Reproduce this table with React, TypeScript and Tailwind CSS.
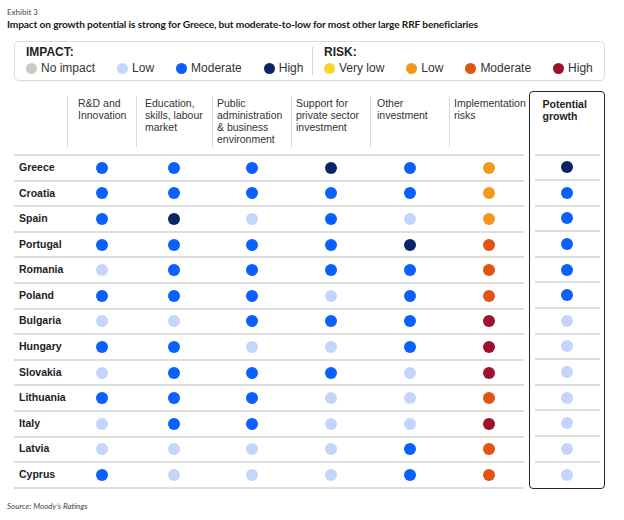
import React from 'react';

type Key = 'n' | 'l' | 'm' | 'h' | 'vl' | 'rl' | 'rm' | 'rh';

const dotColor: Record<Key, string> = {
  n: 'bg-[#c9c9c9]',
  l: 'bg-[#c3d5fb]',
  m: 'bg-[#0a5fff]',
  h: 'bg-[#0b2466]',
  vl: 'bg-[#f7d52a]',
  rl: 'bg-[#f2991c]',
  rm: 'bg-[#e05512]',
  rh: 'bg-[#a0102f]',
};

const rows: { name: string; cells: Key[]; growth: Key }[] = [
  { name: 'Greece', cells: ['m', 'm', 'm', 'h', 'm', 'rl'], growth: 'h' },
  { name: 'Croatia', cells: ['m', 'm', 'm', 'm', 'm', 'rl'], growth: 'm' },
  { name: 'Spain', cells: ['m', 'h', 'l', 'm', 'l', 'rl'], growth: 'm' },
  { name: 'Portugal', cells: ['m', 'm', 'm', 'm', 'h', 'rm'], growth: 'm' },
  { name: 'Romania', cells: ['l', 'm', 'm', 'm', 'm', 'rm'], growth: 'm' },
  { name: 'Poland', cells: ['m', 'm', 'm', 'l', 'm', 'rm'], growth: 'm' },
  { name: 'Bulgaria', cells: ['l', 'l', 'm', 'm', 'm', 'rh'], growth: 'l' },
  { name: 'Hungary', cells: ['m', 'm', 'l', 'l', 'm', 'rh'], growth: 'l' },
  { name: 'Slovakia', cells: ['l', 'm', 'm', 'm', 'l', 'rh'], growth: 'l' },
  { name: 'Lithuania', cells: ['m', 'm', 'm', 'l', 'l', 'rm'], growth: 'l' },
  { name: 'Italy', cells: ['l', 'm', 'm', 'l', 'l', 'rh'], growth: 'l' },
  { name: 'Latvia', cells: ['l', 'l', 'l', 'l', 'm', 'rm'], growth: 'l' },
  { name: 'Cyprus', cells: ['m', 'l', 'l', 'l', 'm', 'rm'], growth: 'l' },
];

const headers: { lines: string[]; pad: string }[] = [
  { lines: ['R&D and', 'Innovation'], pad: 'pl-[10px]' },
  { lines: ['Education,', 'skills, labour', 'market'], pad: 'pl-[8px]' },
  { lines: ['Public', 'administration', '& business', 'environment'], pad: 'pl-[4px]' },
  { lines: ['Support for', 'private sector', 'investment'], pad: 'pl-[4px]' },
  { lines: ['Other', 'investment'], pad: 'pl-[6px]' },
  { lines: ['Implementation', 'risks'], pad: 'pl-[4px]' },
];

const grid = 'grid grid-cols-[53px_69px_76px_79px_79px_79px_75px]';

function Dot({ k, size = 'w-[12px] h-[12px]' }: { k: Key; size?: string }) {
  return <span className={`block rounded-full ${size} ${dotColor[k]}`} />;
}

function LegendItem({ k, label }: { k: Key; label: string }) {
  return (
    <div className="flex items-center gap-[4px]">
      <Dot k={k} size="w-[11px] h-[11px]" />
      <span>{label}</span>
    </div>
  );
}

export default function App() {
  return (
    <div
      className="w-[624px] h-[520px] bg-white overflow-hidden pt-[7px] text-[#222]"
      style={{ fontFamily: '"Liberation Sans", Arial, sans-serif' }}
    >
      <div className="pl-[7px] font-['Lato',sans-serif]">
        <div className="text-[8px] leading-[10px] text-[#444]">Exhibit 3</div>
        <div className="text-[10.2px] leading-[14px] tracking-[-0.15px] font-bold text-[#1a1a1a]">
          Impact on growth potential is strong for Greece, but moderate-to-low for most other large RRF beneficiaries
        </div>
      </div>

      {/* legend */}
      <div className="ml-[14px] mt-[10px] w-[591px] h-[40px] border-[1.5px] border-[#dcdcdc] rounded-[5px] flex text-[12px] leading-[14px] text-[#333] shadow-[0_1px_1px_rgba(0,0,0,0.04)]">
        <div className="w-[297px] pl-[11px] pt-[3px]">
          <div className="font-bold text-[#222]">IMPACT:</div>
          <div className="mt-[2px] flex gap-[22px]">
            <LegendItem k="n" label="No impact" />
            <LegendItem k="l" label="Low" />
            <LegendItem k="m" label="Moderate" />
            <LegendItem k="h" label="High" />
          </div>
        </div>
        <div className="my-[5px] border-l-[1.5px] border-[#d6d6d6]" />
        <div className="pl-[11px] pt-[3px]">
          <div className="font-bold text-[#222]">RISK:</div>
          <div className="mt-[2px] flex gap-[22px]">
            <LegendItem k="vl" label="Very low" />
            <LegendItem k="rl" label="Low" />
            <LegendItem k="rm" label="Moderate" />
            <LegendItem k="rh" label="High" />
          </div>
        </div>
      </div>

      {/* table */}
      <div className="ml-[14px] mt-[10px] flex items-start">
        <div className="w-[510px]">
          <div className={`${grid} h-[65px] border-b-2 border-[#dedede] text-[10.5px] leading-[12px] text-[#333]`}>
            <div />
            {headers.map((h, i) => (
              <div key={i} className={`mt-[5px] mb-[7px] pt-[1px] border-l-[1.5px] border-[#d9d9d9] ${h.pad}`}>
                {h.lines.map((l) => (
                  <div key={l}>{l}</div>
                ))}
              </div>
            ))}
          </div>
          {rows.map((r) => (
            <div key={r.name} className={`${grid} h-[25.6px] border-b-2 border-[#dedede] items-center`}>
              <div className="pl-[5px] text-[10.5px] font-bold text-[#222]">{r.name}</div>
              {r.cells.map((c, i) => (
                <div key={i} className={`flex justify-center ${i === 5 ? 'pl-[5px]' : ''}`}>
                  <Dot k={c} />
                </div>
              ))}
            </div>
          ))}
        </div>

        <div className="ml-[5px] w-[76px] border-[1.5px] border-[#262626] rounded-[4px] px-[4.5px]">
          <div className="h-[63.5px] border-b-2 border-[#dedede] pl-[8px] pt-[6px] text-[10.5px] leading-[12px] font-bold text-[#222]">
            <div>Potential</div>
            <div>growth</div>
          </div>
          {rows.map((r, i) => (
            <div
              key={r.name}
              className={`h-[25.6px] flex items-center justify-center ${i < rows.length - 1 ? 'border-b-2 border-[#dedede]' : ''}`}
            >
              <Dot k={r.growth} />
            </div>
          ))}
        </div>
      </div>

      <div className="pl-[7px] mt-[12px] text-[8px] leading-[10px] italic text-[#444] font-['Lato',sans-serif]">
        Source: Moody’s Ratings
      </div>
    </div>
  );
}
